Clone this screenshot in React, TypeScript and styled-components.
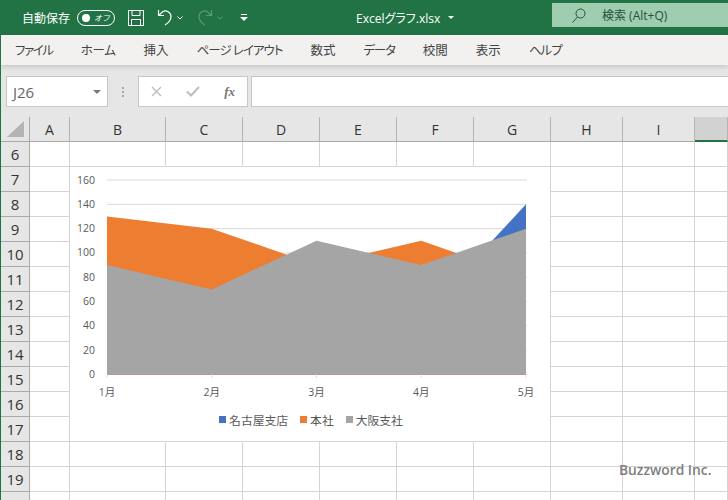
import React from "react";
import styled, { createGlobalStyle } from "styled-components";

const FONT = `"Open Sans", "Noto Sans CJK JP", sans-serif`;

const GlobalStyle = createGlobalStyle`
  html, body {
    margin: 0;
    padding: 0;
    background: #ffffff;
    overflow: hidden;
  }
  * {
    box-sizing: border-box;
  }
`;

const Page = styled.div`
  width: 728px;
  height: 500px;
  overflow: hidden;
  border-left: 1px solid #217346;
  font-family: ${FONT};
  background: #e6e6e6;
`;

const TitleBar = styled.div`
  display: flex;
  align-items: center;
  height: 35px;
  margin-left: -1px;
  padding-left: 22px;
  background: #217346;
  color: #ffffff;
`;

const AutoSaveLabel = styled.span`
  font-size: 12px;
  width: 55px;
  white-space: nowrap;
`;

const Toggle = styled.div`
  display: flex;
  align-items: center;
  justify-content: space-between;
  width: 38px;
  height: 16px;
  padding: 0 4px 0 4px;
  border: 1px solid #ffffff;
  border-radius: 8px;
  font-size: 8px;
  font-style: italic;
  margin-right: 13px;
`;

const ToggleDot = styled.span`
  width: 8px;
  height: 8px;
  border-radius: 50%;
  background: #ffffff;
`;

const QuickIcon = styled.svg<{ $gap: number }>`
  flex: none;
  display: block;
  margin-right: ${({ $gap }) => $gap}px;
`;

const FileName = styled.div`
  display: flex;
  align-items: center;
  gap: 8px;
  margin-left: 108px;
  width: 196px;
  font-size: 12px;
  font-feature-settings: "palt";
  white-space: nowrap;
`;

const Caret = styled.span`
  width: 0;
  height: 0;
  border-left: 3px solid transparent;
  border-right: 3px solid transparent;
  border-top: 3px solid #ffffff;
`;

const SearchBox = styled.div`
  display: flex;
  align-items: center;
  gap: 16px;
  width: 176px;
  height: 24px;
  padding-left: 20px;
  margin-top: -5px;
  background: #9fcdb0;
  color: #24513a;
  font-size: 12px;
  white-space: nowrap;
`;

const TabBar = styled.div`
  position: relative;
  display: flex;
  align-items: center;
  gap: 28px;
  height: 30px;
  padding: 0 0 2px 14px;
  background: #f3f1f0;
  box-shadow: 0 2px 5px rgba(0, 0, 0, 0.14);
  color: #444444;
`;

const Tab = styled.span<{ $tracking: number }>`
  font-size: 12.5px;
  font-feature-settings: "palt";
  letter-spacing: ${({ $tracking }) => $tracking}px;
  white-space: nowrap;
`;

const FormulaBar = styled.div`
  display: flex;
  align-items: flex-start;
  height: 52px;
  padding: 11px 0 0 5px;
`;

const NameBox = styled.div`
  display: flex;
  align-items: center;
  justify-content: space-between;
  width: 102px;
  height: 31px;
  padding: 0 6px 0 6px;
  background: #ffffff;
  border: 1px solid #c6c6c6;
  color: #666666;
  font-size: 15px;
`;

const NameCaret = styled.span`
  width: 0;
  height: 0;
  border-left: 4px solid transparent;
  border-right: 4px solid transparent;
  border-top: 4px solid #7a7a7a;
`;

const GripDots = styled.div`
  display: flex;
  flex-direction: column;
  gap: 2px;
  width: 30px;
  height: 31px;
  align-items: center;
  justify-content: center;
`;

const GripDot = styled.span`
  width: 2px;
  height: 2px;
  background: #a8a8a8;
`;

const FormulaButtons = styled.div`
  display: flex;
  align-items: center;
  justify-content: space-between;
  width: 110px;
  height: 31px;
  padding: 0 12px 0 12px;
  margin-right: 3px;
  background: #ffffff;
  border: 1px solid #c6c6c6;
`;

const FxLabel = styled.span`
  font-family: "Liberation Serif", serif;
  font-style: italic;
  font-weight: 700;
  font-size: 13px;
  color: #777777;
`;

const FormulaInput = styled.div`
  flex: 1;
  height: 31px;
  background: #ffffff;
  border: 1px solid #c6c6c6;
  border-right: none;
`;

const Sheet = styled.div`
  position: relative;
  display: grid;
  grid-template-columns: 29px 40px 96px 77px 77px 77px 77px 77px 72px 72px 1fr;
  grid-auto-rows: 25px;
  background: #ffffff;
`;

const CornerCell = styled.div`
  display: flex;
  align-items: center;
  justify-content: center;
  background: #e6e6e6;
  border-right: 1px solid #a9a9a9;
  border-bottom: 1px solid #a9a9a9;
`;

const ColHeader = styled.div<{ $active?: boolean }>`
  display: flex;
  align-items: center;
  justify-content: center;
  background: ${({ $active }) => ($active ? "#d2d2d2" : "#e6e6e6")};
  border-right: 1px solid #b4b4b4;
  border-bottom: ${({ $active }) =>
    $active ? "2px solid #217346" : "1px solid #a9a9a9"};
  color: #333333;
  font-size: 14px;
`;

const RowHeader = styled.div`
  display: flex;
  align-items: center;
  justify-content: center;
  background: #e6e6e6;
  border-right: 1px solid #a9a9a9;
  border-bottom: 1px solid #a9a9a9;
  color: #333333;
  font-size: 15px;
`;

const Cell = styled.div`
  border-right: 1px solid #d4d4d4;
  border-bottom: 1px solid #d4d4d4;
`;

const ChartPanel = styled.div`
  position: absolute;
  left: 69px;
  top: 50px;
  display: flex;
  flex-direction: column;
  width: 480px;
  height: 274px;
  background: #ffffff;
`;

const ChartSvg = styled.svg`
  display: block;
  flex: none;
`;

const AxisText = styled.text`
  font-family: ${FONT};
  font-size: 10.5px;
  fill: #595959;
`;

const Legend = styled.div`
  display: flex;
  align-items: center;
  justify-content: center;
  gap: 12px;
  padding-left: 2px;
  margin-top: 8px;
  color: #595959;
  font-size: 11.8px;
`;

const LegendItem = styled.div`
  display: flex;
  align-items: center;
  gap: 3px;
  white-space: nowrap;
`;

const LegendSwatch = styled.span<{ $color: string }>`
  width: 7px;
  height: 7px;
  background: ${({ $color }) => $color};
`;

const Watermark = styled.div`
  position: absolute;
  left: 618px;
  top: 343px;
  color: #7f7f7f;
  font-size: 13.8px;
  font-weight: 600;
  white-space: nowrap;
`;

const TABS = [
  { label: "ファイル", tracking: -1.4 },
  { label: "ホーム", tracking: -0.3 },
  { label: "挿入", tracking: 0 },
  { label: "ページ レイアウト", tracking: -1 },
  { label: "数式", tracking: 0 },
  { label: "データ", tracking: -1.2 },
  { label: "校閲", tracking: 0 },
  { label: "表示", tracking: 0 },
  { label: "ヘルプ", tracking: -1 },
];
const COLUMNS = ["A", "B", "C", "D", "E", "F", "G", "H", "I", ""];
const ROWS = [6, 7, 8, 9, 10, 11, 12, 13, 14, 15, 16, 17, 18, 19, 20];

const MONTHS = ["1月", "2月", "3月", "4月", "5月"];
const TICKS = [0, 20, 40, 60, 80, 100, 120, 140, 160];
const SERIES = [
  { name: "名古屋支店", color: "#4472c4", values: [50, 40, 60, 47, 140] },
  { name: "本社", color: "#ed7d31", values: [130, 120, 90, 110, 80] },
  { name: "大阪支社", color: "#a5a5a5", values: [90, 70, 110, 90, 120] },
];

const PLOT_LEFT = 37;
const PLOT_RIGHT = 456;
const PLOT_BOTTOM = 207.5;
const UNIT = 1.2156;

const xAt = (i: number) => PLOT_LEFT + (i * (PLOT_RIGHT - PLOT_LEFT)) / 4;
const yAt = (v: number) => PLOT_BOTTOM - v * UNIT;

const AreaChart: React.FC = () => (
  <ChartSvg width={480} height={236} viewBox="0 0 480 236">
    {TICKS.map((t) => (
      <line
        key={t}
        x1={PLOT_LEFT}
        x2={PLOT_RIGHT + 1}
        y1={yAt(t)}
        y2={yAt(t)}
        stroke="#d9d9d9"
      />
    ))}
    {SERIES.map((s) => (
      <polygon
        key={s.name}
        fill={s.color}
        points={[
          `${PLOT_LEFT},${PLOT_BOTTOM}`,
          ...s.values.map((v, i) => `${xAt(i)},${yAt(v)}`),
          `${PLOT_RIGHT},${PLOT_BOTTOM}`,
        ].join(" ")}
      />
    ))}
    {MONTHS.map((m, i) => (
      <React.Fragment key={m}>
        <line
          x1={xAt(i)}
          x2={xAt(i)}
          y1={PLOT_BOTTOM}
          y2={PLOT_BOTTOM + 3}
          stroke="#d9d9d9"
        />
        <AxisText x={xAt(i)} y={229} textAnchor="middle">
          {m}
        </AxisText>
      </React.Fragment>
    ))}
    {TICKS.map((t) => (
      <AxisText key={t} x={25} y={yAt(t) + 3.5} textAnchor="end">
        {t}
      </AxisText>
    ))}
  </ChartSvg>
);

const App: React.FC = () => {
  return (
    <Page>
      <GlobalStyle />
      <TitleBar>
        <AutoSaveLabel>自動保存</AutoSaveLabel>
        <Toggle>
          <ToggleDot />
          オフ
        </Toggle>
        <QuickIcon $gap={13} width="16" height="16" viewBox="0 0 16 16" fill="none" stroke="#fff">
          <path d="M.5.5h15v15H.5zM4 .5v5h8v-5M3.5 15.5V9.5h9v6" />
        </QuickIcon>
        <QuickIcon $gap={4} width="16" height="17" viewBox="0 0 16 17" fill="none" stroke="#fff" strokeWidth="1.2">
          <path d="M1.500 1v5.500H7M1.500 6.500 6 2.500c3-1.500 8 .5 8 5 0 3.500-2 6-6 8.500" />
        </QuickIcon>
        <QuickIcon $gap={14} width="6" height="4" viewBox="0 0 6 4" fill="none" stroke="#fff">
          <path d="M.5.5 3 3 5.500.5" />
        </QuickIcon>
        <QuickIcon $gap={4} width="16" height="17" viewBox="0 0 16 17" fill="none" stroke="#5d9a78" strokeWidth="1.2">
          <path d="M14.500 1v5.500H9M14.500 6.500 10 2.500C7 1 2 3 2 7.500c0 3.500 2 6 6 8.500" />
        </QuickIcon>
        <QuickIcon $gap={17} width="6" height="4" viewBox="0 0 6 4" fill="none" stroke="#5d9a78">
          <path d="M.5.5 3 3 5.500.5" />
        </QuickIcon>
        <QuickIcon $gap={0} width="8" height="7" viewBox="0 0 8 7" fill="#fff">
          <path d="M1 0h6v1H1zM0 3h8L4 7z" />
        </QuickIcon>
        <FileName>
          Excelグラフ.xlsx
          <Caret />
        </FileName>
        <SearchBox>
          <svg width="14" height="15" viewBox="0 0 14 15" fill="none" stroke="#24513a">
            <circle cx="8.5" cy="5.500" r="4.500" />
            <path d="M5.500 9 .5 14.500" />
          </svg>
          検索 (Alt+Q)
        </SearchBox>
      </TitleBar>
      <TabBar>
        {TABS.map((t) => (
          <Tab key={t.label} $tracking={t.tracking}>
            {t.label}
          </Tab>
        ))}
      </TabBar>
      <FormulaBar>
        <NameBox>
          J26
          <NameCaret />
        </NameBox>
        <GripDots>
          <GripDot />
          <GripDot />
          <GripDot />
        </GripDots>
        <FormulaButtons>
          <svg width="11" height="11" viewBox="0 0 11 11" fill="none" stroke="#bdbdbd" strokeWidth="1.4">
            <path d="M1 1l9 9M10 1l-9 9" />
          </svg>
          <svg width="14" height="11" viewBox="0 0 14 11" fill="none" stroke="#bdbdbd" strokeWidth="2">
            <path d="M1 5.500 5 9.500 13 1" />
          </svg>
          <FxLabel>fx</FxLabel>
        </FormulaButtons>
        <FormulaInput />
      </FormulaBar>
      <Sheet>
        <CornerCell>
          <svg width="17" height="16" viewBox="0 0 17 16" fill="#b4b4b4">
            <path d="M17 0v16H0z" />
          </svg>
        </CornerCell>
        {COLUMNS.map((c, i) => (
          <ColHeader key={i} $active={c === ""}>
            {c}
          </ColHeader>
        ))}
        {ROWS.map((r) => (
          <React.Fragment key={r}>
            <RowHeader>{r}</RowHeader>
            {COLUMNS.map((_, i) => (
              <Cell key={i} />
            ))}
          </React.Fragment>
        ))}
        <ChartPanel>
          <AreaChart />
          <Legend>
            {SERIES.map((s) => (
              <LegendItem key={s.name}>
                <LegendSwatch $color={s.color} />
                {s.name}
              </LegendItem>
            ))}
          </Legend>
        </ChartPanel>
        <Watermark>Buzzword Inc.</Watermark>
      </Sheet>
    </Page>
  );
};

export default App;
